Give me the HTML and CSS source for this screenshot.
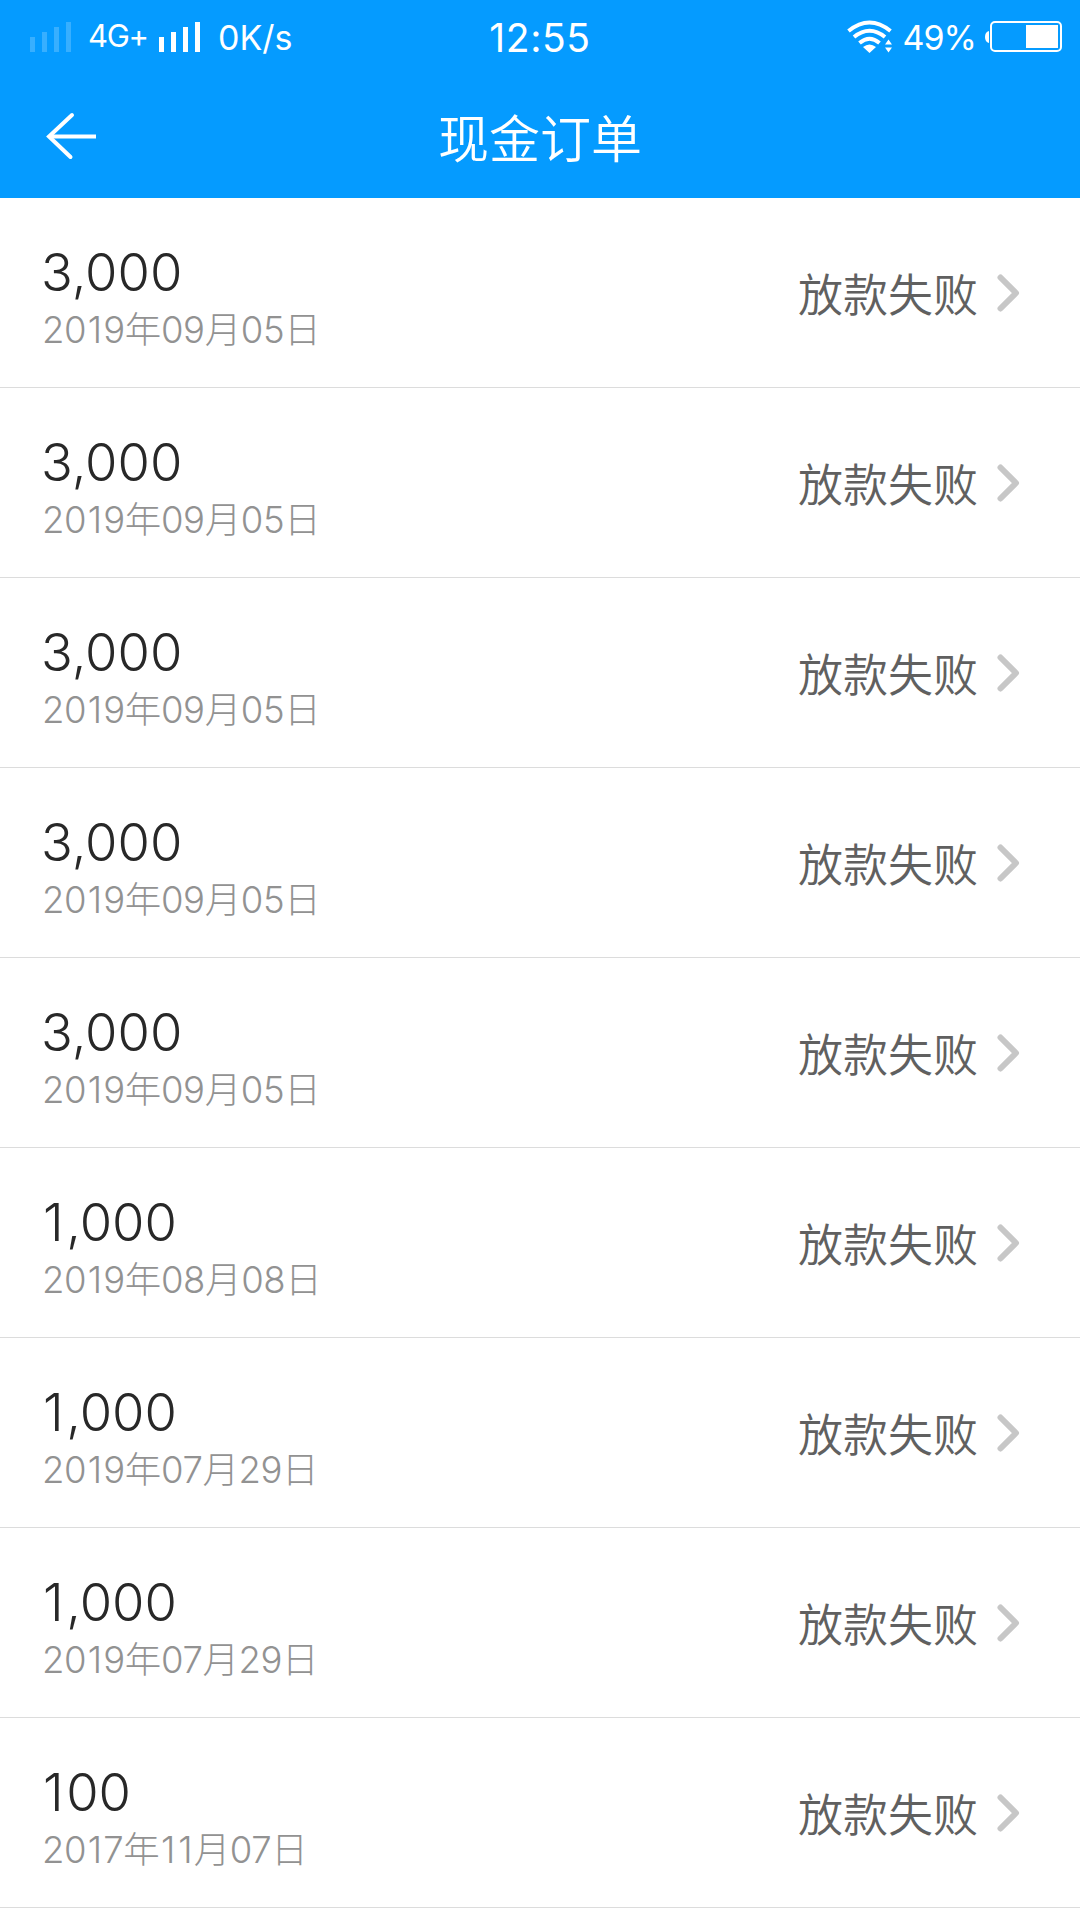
FILE: index.html
```html
<!DOCTYPE html>
<html lang="zh-CN">
<head>
<meta charset="utf-8">
<title>现金订单</title>
<link rel="stylesheet" href="styles.css">
</head>
<body>
<header class="header">
  <div class="status">
    <div class="status-left">
      <svg class="signal signal-off" width="42" height="30" viewBox="0 0 42 30"><path d="M0 15h5v15H0zM12 10h5v20h-5zM24 5h5v25h-5zM36 0h5v30h-5z"/></svg>
      <span class="network">4G+</span>
      <svg class="signal" width="42" height="30" viewBox="0 0 42 30"><path d="M0 15h5v15H0zM12 10h5v20h-5zM24 5h5v25h-5zM36 0h5v30h-5z"/></svg>
      <span class="speed">0K/s</span>
    </div>
    <span class="clock">12:55</span>
    <div class="status-right">
      <svg class="wifi" width="46" height="33" viewBox="0 0 46 33">
        <path class="arc" d="M1.500 11Q22.500-6 43.500 11M7 17Q22.500 4.500 38 17M12.500 23Q22.500 14.500 32.500 23"/>
        <path class="solid" d="M16 27Q22.500 22 29 27L22.500 33zM38 24.500l3.500-5 3.500 5zM38 27.500h7l-3.500 5z"/>
      </svg>
      <span class="percent">49%</span>
      <svg class="battery" width="77" height="31" viewBox="0 0 77 31"><path class="solid" d="M4 10v12Q0 21 0 16T4 10zM41 4h32v23H41z"/><rect class="case" x="6" y="1" width="70" height="29" rx="4"/></svg>
    </div>
  </div>
  <nav class="nav">
    <svg class="back" width="50" height="48" viewBox="0 0 50 48"><path d="M26 3L3 24.500L24.500 45"/><path class="stem" d="M4 24.500H50"/></svg>
    <h1 class="title">现金订单</h1>
  </nav>
</header>
<main class="orders" id="orders"></main>
<template id="order-row">
  <section class="order">
    <div class="info"><div class="amount"></div><div class="date"></div></div>
    <div class="state">放款失败</div>
    <svg class="chevron" width="23" height="38" viewBox="0 0 23 38"><path d="M3.500 3.500L19 19L3.500 34.500"/></svg>
  </section>
</template>
<script src="orders.js"></script>
</body>
</html>
```
FILE: styles.css
```css
* { box-sizing: border-box; }
body {
  margin: 0;
  width: 1080px;
  height: 1920px;
  overflow: hidden;
  background: #fff;
  font-family: Inter, "Noto Sans CJK SC", sans-serif;
}
svg { display: block; flex: none; }
.header { height: 198px; background: #059bff; color: #fff; }
.status {
  height: 74px;
  display: grid;
  grid-template-columns: 1fr auto 1fr;
  padding: 0 18px;
  line-height: 74px;
  white-space: nowrap;
}
.status-left, .status-right { display: flex; align-items: center; }
.status-left { padding-left: 12px; }
.status-right { justify-content: flex-end; }
.signal { fill: #fff; margin-bottom: 2px; }
.signal-off { opacity: .2; }
.network { font-size: 31px; width: 71px; margin: -3px 0 0 16px; letter-spacing: -1.3px; }
.speed { font-size: 34px; margin-left: 17px; padding-top: 1px; }
.clock { font-size: 39px; letter-spacing: .6px; padding-top: 1px; }
.wifi { margin-bottom: 2px; }
.wifi .arc { fill: none; stroke: #fff; stroke-width: 4; }
.solid { fill: #fff; }
.percent { font-size: 34px; margin: 0 9px 0 10px; letter-spacing: -1px; padding-top: 1px; }
.battery { margin-bottom: 2px; }
.case { fill: none; stroke: #fff; stroke-width: 2; }
.nav {
  height: 124px;
  display: grid;
  grid-template-columns: 100px 1fr 100px;
  align-items: center;
  padding: 0 0 1px;
}
.back { margin: 0 0 0 46px; fill: none; stroke: #fff; stroke-width: 4; stroke-linecap: round; }
.stem { stroke-linecap: butt; }
.title { margin: 0; padding-top: 8px; font-size: 51px; font-weight: 350; line-height: 74px; text-align: center; }
.order {
  height: 190px;
  display: flex;
  align-items: center;
  padding: 0 60px 0 42px;
  border-bottom: 1px solid #dcdcdc;
}
.info { flex: 1; padding-top: 9px; }
.amount { font-size: 52.5px; line-height: 62px; font-weight: 320; color: #282828; margin-left: -1px; }
.date { font-size: 36.5px; line-height: 50px; padding-top: 2px; margin-bottom: -2px; font-weight: 320; color: #929292; letter-spacing: -.4px; }
.amount .one { padding: 0 2.5px 0 2px; }
.date .one { padding: 0 1.6px; }
.state { font-size: 45px; line-height: 64px; padding-top: 7px; font-weight: 350; color: #606060; }
.chevron { margin-left: 19px; fill: none; stroke: #c7c7c7; stroke-width: 6; stroke-linecap: round; stroke-linejoin: round; }
```
FILE: orders.js
```js
const orders = [
  ["3,000", "2019年09月05日"],
  ["3,000", "2019年09月05日"],
  ["3,000", "2019年09月05日"],
  ["3,000", "2019年09月05日"],
  ["3,000", "2019年09月05日"],
  ["1,000", "2019年08月08日"],
  ["1,000", "2019年07月29日"],
  ["1,000", "2019年07月29日"],
  ["100", "2017年11月07日"]
];
const list = document.getElementById("orders");
const template = document.getElementById("order-row");
// The narrow digit 1 gets a little side bearing of its own.
const spaced = text => text.replace(/1/g, '<span class="one">1</span>');
for (const [amount, date] of orders) {
  const row = template.content.cloneNode(true);
  row.querySelector(".amount").innerHTML = spaced(amount);
  row.querySelector(".date").innerHTML = spaced(date);
  list.append(row);
}
```
